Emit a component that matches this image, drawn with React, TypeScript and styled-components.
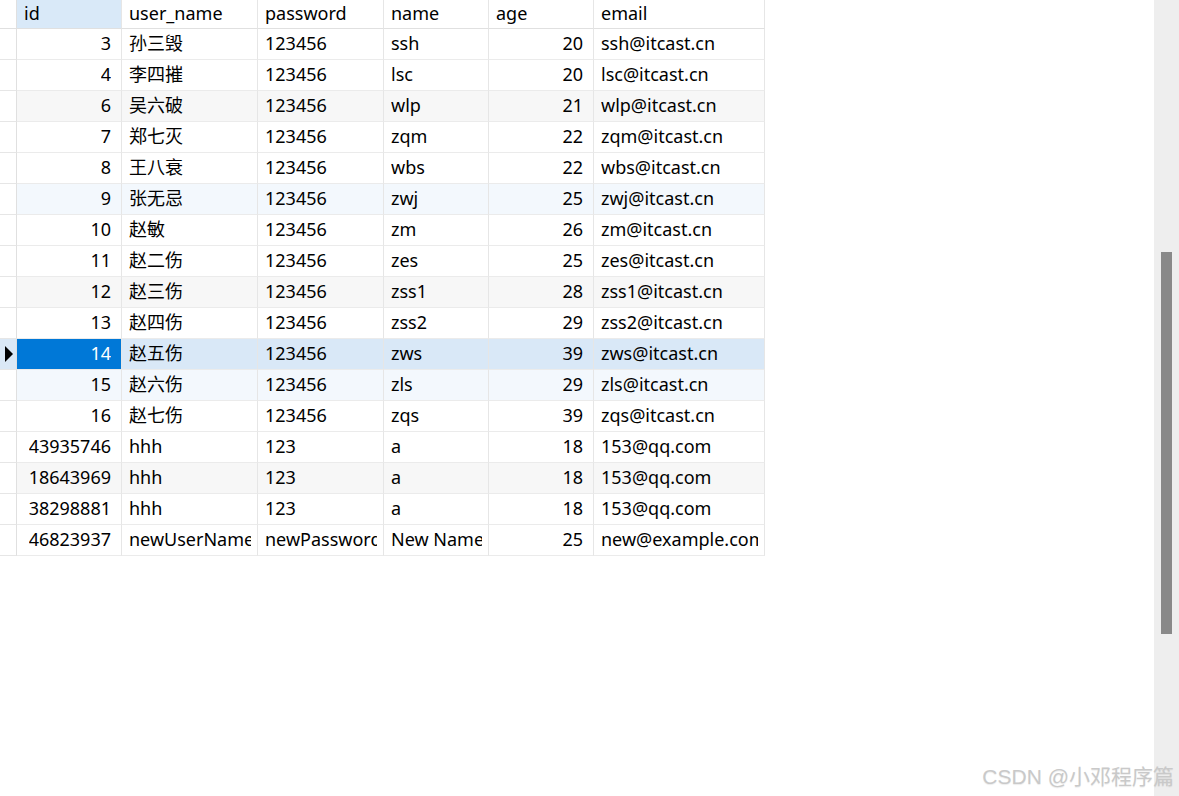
import React from "react";
import styled, { createGlobalStyle } from "styled-components";

const GlobalStyle = createGlobalStyle`
  html, body { margin: 0; padding: 0; background: #ffffff; }
  body { font-family: "Noto Sans", "Noto Sans CJK SC", sans-serif; }
  * { box-sizing: border-box; }
`;

type Tone = "plain" | "gray" | "blue" | "selected";

const Page = styled.div`
  position: relative;
  display: flex;
  width: 1179px;
  height: 796px;
  overflow: hidden;
  background: #ffffff;
`;

const GridArea = styled.div`
  flex: 1;
  display: flex;
  flex-direction: column;
  align-items: flex-start;
`;

const Grid = styled.div`
  display: flex;
  flex-direction: column;
  font-size: 18px;
  color: #000000;
`;

const widths = [17, 105, 136, 126, 105, 105, 171];

const Row = styled.div<{ $tone: Tone; $header?: boolean }>`
  display: flex;
  height: ${(p) => (p.$header ? 29 : 31)}px;
  background: ${(p) =>
    p.$tone === "gray"
      ? "#f7f7f7"
      : p.$tone === "blue"
      ? "#f3f8fd"
      : p.$tone === "selected"
      ? "#d9e8f7"
      : "#ffffff"};
`;

const Cell = styled.div<{ $w: number; $right?: boolean; $header?: boolean; $active?: boolean }>`
  width: ${(p) => p.$w}px;
  flex: none;
  display: flex;
  align-items: center;
  justify-content: ${(p) => (p.$right ? "flex-end" : "flex-start")};
  padding: ${(p) => (p.$right ? "0 10px 0 6px" : "0 6px 0 7px")};
  border-right: 1px solid #e6e6e6;
  border-bottom: 1px solid ${(p) => (p.$header ? "#e0e0e0" : "#ebebeb")};
  background: ${(p) => (p.$active ? (p.$header ? "#d9e9f8" : "#0078d7") : "transparent")};
  color: ${(p) => (p.$active && !p.$header ? "#ffffff" : "#000000")};
  overflow: hidden;
`;

const CellText = styled.span`
  display: block;
  overflow: hidden;
  white-space: nowrap;
  line-height: 24px;
  margin-top: -2px;
`;

const RowHead = styled.div<{ $current?: boolean; $header?: boolean }>`
  width: 17px;
  flex: none;
  display: flex;
  align-items: center;
  padding-left: 5px;
  border-right: 1px solid #e0e0e0;
  border-bottom: 1px solid ${(p) => (p.$header ? "#e0e0e0" : "#e6e6e6")};
  background: ${(p) => (p.$current ? "#dae8f6" : "#ffffff")};
`;

const Arrow = styled.span`
  width: 0;
  height: 0;
  border-top: 8px solid transparent;
  border-bottom: 8px solid transparent;
  border-left: 8px solid #000000;
`;

const ScrollTrack = styled.div`
  width: 25px;
  flex: none;
  height: 100%;
  background: #eeeeee;
  display: flex;
  justify-content: center;
  padding: 252px 0 0 0;
`;

const ScrollThumb = styled.div`
  width: 11px;
  height: 382px;
  background: #898989;
  margin-right: 1px;
`;

const Watermark = styled.div`
  position: absolute;
  right: 5px;
  bottom: 6px;
  font-family: "Liberation Sans", "Noto Sans CJK SC", sans-serif;
  font-size: 21px;
  color: #c9c9c9;
  text-shadow: 0 1px 1px rgba(0, 0, 0, 0.08);
  white-space: nowrap;
`;

type Rec = [string, string, string, string, string, string, Tone];

const columns = ["id", "user_name", "password", "name", "age", "email"];
const rightAligned = [true, false, false, false, true, false];

const data: Rec[] = [
  ["3", "孙三毁", "123456", "ssh", "20", "ssh@itcast.cn", "plain"],
  ["4", "李四摧", "123456", "lsc", "20", "lsc@itcast.cn", "plain"],
  ["6", "吴六破", "123456", "wlp", "21", "wlp@itcast.cn", "gray"],
  ["7", "郑七灭", "123456", "zqm", "22", "zqm@itcast.cn", "plain"],
  ["8", "王八衰", "123456", "wbs", "22", "wbs@itcast.cn", "plain"],
  ["9", "张无忌", "123456", "zwj", "25", "zwj@itcast.cn", "blue"],
  ["10", "赵敏", "123456", "zm", "26", "zm@itcast.cn", "plain"],
  ["11", "赵二伤", "123456", "zes", "25", "zes@itcast.cn", "plain"],
  ["12", "赵三伤", "123456", "zss1", "28", "zss1@itcast.cn", "gray"],
  ["13", "赵四伤", "123456", "zss2", "29", "zss2@itcast.cn", "plain"],
  ["14", "赵五伤", "123456", "zws", "39", "zws@itcast.cn", "selected"],
  ["15", "赵六伤", "123456", "zls", "29", "zls@itcast.cn", "blue"],
  ["16", "赵七伤", "123456", "zqs", "39", "zqs@itcast.cn", "plain"],
  ["43935746", "hhh", "123", "a", "18", "153@qq.com", "plain"],
  ["18643969", "hhh", "123", "a", "18", "153@qq.com", "gray"],
  ["38298881", "hhh", "123", "a", "18", "153@qq.com", "plain"],
  ["46823937", "newUserName", "newPassword", "New Name", "25", "new@example.com", "plain"],
];

export default function App() {
  return (
    <>
      <GlobalStyle />
      <Page>
        <GridArea>
          <Grid>
            <Row $tone="plain" $header>
              <RowHead $header />
              {columns.map((c, i) => (
                <Cell key={c} $w={widths[i + 1]} $header $active={i === 0}>
                  <CellText>{c}</CellText>
                </Cell>
              ))}
            </Row>
            {data.map((r, ri) => {
              const tone = r[6];
              const selected = tone === "selected";
              return (
                <Row key={ri} $tone={tone}>
                  <RowHead $current={selected}>{selected && <Arrow />}</RowHead>
                  {r.slice(0, 6).map((v, ci) => (
                    <Cell
                      key={ci}
                      $w={widths[ci + 1]}
                      $right={rightAligned[ci]}
                      $active={selected && ci === 0}
                    >
                      <CellText>{v}</CellText>
                    </Cell>
                  ))}
                </Row>
              );
            })}
          </Grid>
        </GridArea>
        <ScrollTrack>
          <ScrollThumb />
        </ScrollTrack>
        <Watermark>CSDN @小邓程序篇</Watermark>
      </Page>
    </>
  );
}
